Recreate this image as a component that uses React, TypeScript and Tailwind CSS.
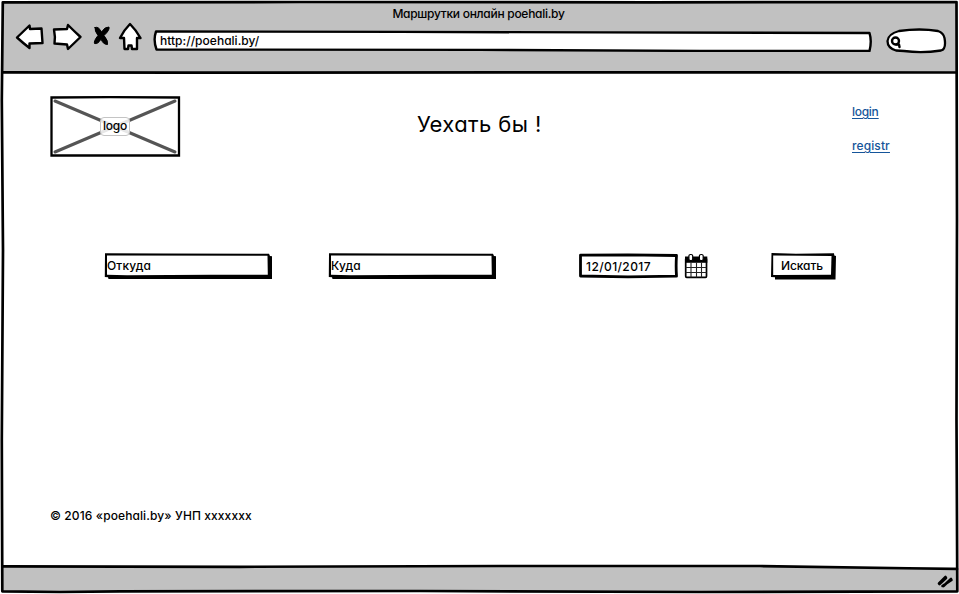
import React from "react";

const ink = { fill: "none", stroke: "#000", strokeLinecap: "round", strokeLinejoin: "round" } as const;

function Toolbar() {
  return (
    <header className="mx-[3px] mt-[2px] flex h-[71px] shrink-0 flex-col bg-[#c1c1c1]">
      <h1 className="h-[22px] pt-[2px] pr-[2px] text-center text-[12px] font-[450] leading-[20px] tracking-[-0.28px]">Маршрутки онлайн poehali.by</h1>
      <div className="flex items-start pl-[12px]">
        <svg width="128" height="30" viewBox="15 22 128 30" {...ink} strokeWidth="2.4" className="-mt-[2px] shrink-0">
          <path fill="#fff" d="M17 37.5L29.5 25.500L30 29L41.5 28.500L42.500 43L29.500 43.500L29.500 48Q23 43 17 37.5Z" />
          <path fill="#fff" d="M54 29.500L67 29L68 25Q74 31 80.500 37L68 49L67 44.500L54.500 43.500Q55.500 37 54 29.500Z" />
          <path fill="#000" strokeWidth="1" d="M95 27.500Q98.500 26 101.500 32Q105 26.500 109 27Q110 30 104 35.500Q108.500 41 107.500 44.500Q103 44.500 101 39Q98 44.500 94.500 43.500Q93.500 41 98 35.500Q94.500 31 95 27.500Z" />
          <path fill="#fff" d="M130 24Q124 30 120 38L124 38L124.500 49L128 49L128.500 45.500L131.500 45.500L132 49L137 49L137 38L140.500 38Q136 30 130 24Z" />
        </svg>
        <div className="relative ml-[10px] mt-[6px] h-[22px] w-[719px] shrink-0">
          <svg className="absolute inset-0" width="719" height="22" viewBox="153 30 719 22" {...ink} strokeWidth="2.4">
            <path fill="#fff" d="M156 31.500Q153 40 156.500 49.500L480 49.900L700 50.900L869.500 51Q872 41 869.500 33L600 32.400L400 31.900Z" />
          </svg>
          <span className="absolute left-[7px] top-px text-[12px] font-[450] leading-[20px] tracking-[0.02px]">http://poehali.by/</span>
        </div>
        <svg className="ml-[13px] mt-[4px] shrink-0" width="62" height="26" viewBox="885 28 62 26" {...ink} strokeWidth="2.3">
          <path fill="#fff" d="M899 31Q920 28 938 31Q943.500 33 944.500 38Q946.500 49 941 50.500Q922 53.500 904 51L896 50.500Q887.500 48 887.500 41Q888 34 899 31Z" />
          <circle cx="895.500" cy="41" r="3.500" strokeWidth="2.400" />
          <path d="M896.500 44.500L899 44.500L899.500 47" strokeWidth="2.400" />
        </svg>
      </div>
    </header>
  );
}

function Logo() {
  return (
    <div className="relative flex h-[61px] w-[131px] items-center justify-center">
      <svg className="absolute inset-0" width="131" height="61" viewBox="50 96 131 61" {...ink}>
        <path d="M55 101L175 152M55 152L175 101" stroke="#555" strokeWidth="3" />
        <path d="M51.500 97.500L110 97.200L179 97.500L179 155.500L60 155.300L51.500 155.500Z" strokeWidth="2.300" strokeLinejoin="miter" />
      </svg>
      <span className="relative -left-[0.5px] flex h-[19px] w-[30px] items-center justify-center rounded-[4px] border border-[#c4c4c4] bg-white/85 pb-[2px] text-[12px] font-[450] leading-none tracking-[-0.2px]">logo</span>
    </div>
  );
}

function ComboField({ label }: { label: string }) {
  return (
    <div className="relative h-[27px] w-[168px] shrink-0">
      <svg className="absolute inset-0" width="168" height="27" viewBox="0 0 168 27">
        <path fill="#000" d="M1 .3L60 .6L165 .8L166 3L168 3.200L168 26L4.500 26L4 24.200L.8 24Z" />
        <path fill="#fff" d="M3 2.600L163.500 2.800L163.800 21.700L107 21.700L23 22.200L3 21.700Z" />
      </svg>
      <span className="absolute left-[3px] top-[3px] text-[12px] font-[450] leading-[20px] tracking-[0.15px]">{label}</span>
    </div>
  );
}

function SearchForm() {
  return (
    <form className="mt-[96px] flex items-start pl-[100px]">
      <ComboField label="Откуда" />
      <div className="w-[56px]" />
      <ComboField label="Куда" />
      <div className="relative ml-[82px] h-[26px] w-[100px]">
        <svg className="absolute inset-0" width="100" height="26" viewBox="0 0 100 26" {...ink} strokeWidth="2.800">
          <path d="M2.500 2.200L50 1.800L98.500 2.500Q97.800 13 98.500 23.200L50 23.800L2.500 23Z" />
        </svg>
        <span className="absolute left-[8px] top-[4px] text-[12px] font-[450] leading-[20px] tracking-[0.4px]">12/01/2017</span>
      </div>
      <svg className="ml-[6px]" width="25" height="26" viewBox="684 253 25 26" {...ink}>
        <rect x="685.700" y="258" width="20.800" height="19.300" rx="1" fill="#fff" strokeWidth="1.700" />
        <path fill="#000" stroke="none" d="M685 256.500H707.300V262.800H685Z" />
        <path d="M691 263V277M696.500 263V277M701.500 263V277M686 267.500H706M686 272.500H706" strokeWidth="1.100" stroke="#222" />
        <rect x="688.900" y="254.500" width="3.800" height="6" rx="1.600" fill="#fff" strokeWidth="1.200" />
        <rect x="699.400" y="254.500" width="3.800" height="6" rx="1.600" fill="#fff" strokeWidth="1.200" />
      </svg>
      <button type="button" className="relative ml-[62px] h-[27px] w-[66px]">
        <svg className="absolute inset-0" width="66" height="27" viewBox="0 0 66 27">
          <path fill="#000" d="M.5 0L25 .8L63 .3L63.300 2.500L65 3L64.500 26.500L4 26.500L4 24.300L0 24Z" />
          <path fill="#fff" d="M2.200 2.600L60.500 3L60 21.700L2.200 22Z" />
        </svg>
        <span className="absolute left-[10px] top-[3px] text-[12px] font-[450] leading-[20px] tracking-[-0.1px]">Искать</span>
      </button>
    </form>
  );
}

function WindowFrame() {
  return (
    <svg className="pointer-events-none absolute inset-0" width="959" height="594" {...ink} strokeWidth="2.700">
      <path d="M2.800 2.300L300 2L650 2.300L956.500 2L957 220L956.500 420L957.300 591.300L700 592L420 591L120 591.300L60 592L2.300 591.300L1.800 440L3 250L1.800 100Z" />
      <path d="M3 72.300L180 72.700L520 72.300L956 72.500" />
      <path d="M3 566.300L240 566.800L500 566L760 566L957 569" />
    </svg>
  );
}

export default function App() {
  return (
    <div className="relative flex h-[594px] w-[959px] flex-col overflow-hidden bg-white font-['Inter','Noto_Sans',sans-serif] text-black [font-feature-settings:'cv11']">
      <Toolbar />
      <main className="flex h-[494px] shrink-0 flex-col px-[4px]">
        <div className="flex items-start pl-[46px] pt-[23px]">
          <Logo />
          <h2 className="ml-[236px] mt-[14px] w-[200px] whitespace-nowrap text-[22px] leading-[28px] tracking-[0.4px]">Уехать бы !</h2>
          <nav className="ml-[235px] mt-[6px] flex flex-col items-start gap-[14px] text-[12px] font-[450] leading-[20px] text-[#15559a] underline underline-offset-2">
            <a className="tracking-[-0.3px]">login</a>
            <a className="tracking-[0.1px]">registr</a>
          </nav>
        </div>
        <SearchForm />
        <footer className="mt-[226px] pl-[46px] text-[12px] font-[450] leading-[20px] tracking-[0.1px]">© 2016 «poehali.by» УНП xxxxxxx</footer>
      </main>
      <div className="mx-[3px] flex h-[24px] shrink-0 items-end justify-end bg-[#c1c1c1]">
        <svg width="19" height="18" viewBox="937 573 19 18" {...ink} strokeWidth="2.600">
          <path d="M939 583.500L945.500 577M939.500 584L946 578M943.500 586L951 579M942.500 586L951.500 580" />
        </svg>
      </div>
      <WindowFrame />
    </div>
  );
}
